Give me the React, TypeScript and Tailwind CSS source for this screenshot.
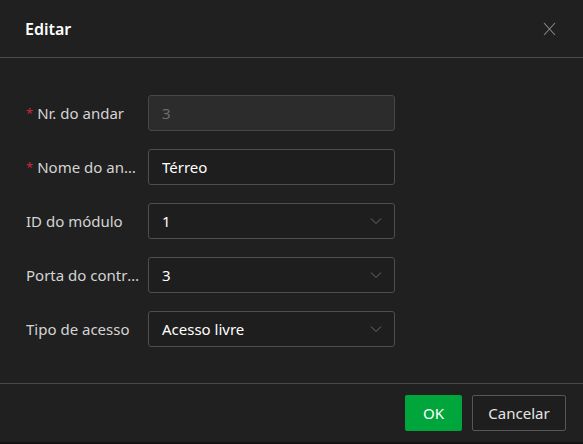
import { useState } from "react";

type Field = {
  label: string;
  value: string;
  required?: boolean;
  kind: "text" | "disabled" | "select";
};

const fields: Field[] = [
  { label: "Nr. do andar", value: "3", required: true, kind: "disabled" },
  { label: "Nome do andar", value: "Térreo", required: true, kind: "text" },
  { label: "ID do módulo", value: "1", kind: "select" },
  { label: "Porta do controlador", value: "3", kind: "select" },
  { label: "Tipo de acesso", value: "Acesso livre", kind: "select" },
];

function Chevron() {
  return (
    <svg width="12" height="8" viewBox="0 0 12 8" className="shrink-0">
      <path d="M1 1.5 L6 6.5 L11 1.5" fill="none" stroke="#6b6b6b" strokeWidth="1" />
    </svg>
  );
}

function FormRow({ field }: { field: Field }) {
  const [value, setValue] = useState(field.value);
  const box =
    "flex h-9 w-[247px] items-center rounded-[3px] border px-[13px] text-[15px]";

  return (
    <div className="flex items-center">
      <div className="flex w-[122px] min-w-0 items-center pr-2 text-[15px] text-[#d4d4d4]">
        {field.required && <span className="mr-1 mt-[2px] text-[13px] text-[#c8283c]">*</span>}
        <span className="min-w-0 truncate" title={field.label}>{field.label}</span>
      </div>
      {field.kind === "select" ? (
        <div className={`${box} justify-between border-[#4e4e52] bg-[#1e1e1e] pr-[12px] text-white`}>
          <span>{value}</span>
          <Chevron />
        </div>
      ) : (
        <input
          value={value}
          disabled={field.kind === "disabled"}
          onChange={(e) => setValue(e.target.value)}
          className={
            field.kind === "disabled"
              ? `${box} border-[#47474b] bg-[#2c2c2c] text-[#6e6e6e] outline-none`
              : `${box} border-[#4e4e52] bg-[#1e1e1e] text-white outline-none`
          }
        />
      )}
    </div>
  );
}

export default function App() {
  return (
    <div
      className="flex h-[444px] w-[583px] flex-col bg-[#141414]"
      style={{ fontFamily: '"Noto Sans", "Open Sans", sans-serif' }}
    >
      <div className="flex h-[442px] flex-col bg-[#202020]">
        <div className="flex h-[58px] items-center justify-between border-b border-[#4a4652] pl-[25px] pr-[24px]">
          <h1 className="text-[16px] font-semibold text-white">Editar</h1>
          <button className="flex h-5 w-5 items-center justify-center">
            <svg width="13" height="14" viewBox="0 0 13 14">
              <path d="M1 1 L12 13 M12 1 L1 13" stroke="#8a8a8a" strokeWidth="1.1" fill="none" />
            </svg>
          </button>
        </div>

        <div className="flex flex-1 flex-col gap-[18px] pl-[26px] pt-[37px]">
          {fields.map((f) => (
            <FormRow key={f.label} field={f} />
          ))}
        </div>

        <div className="flex h-[59px] items-center justify-end gap-[10px] border-t border-[#48484c] pr-[17px]">
          <button className="h-9 w-[57px] rounded-[2px] bg-[#00a53c] text-[15px] text-white">OK</button>
          <button className="h-9 w-[94px] rounded-[2px] border border-[#55555a] bg-[#1e1e1e] text-[15px] text-[#e6e6e6]">
            Cancelar
          </button>
        </div>
      </div>
    </div>
  );
}
